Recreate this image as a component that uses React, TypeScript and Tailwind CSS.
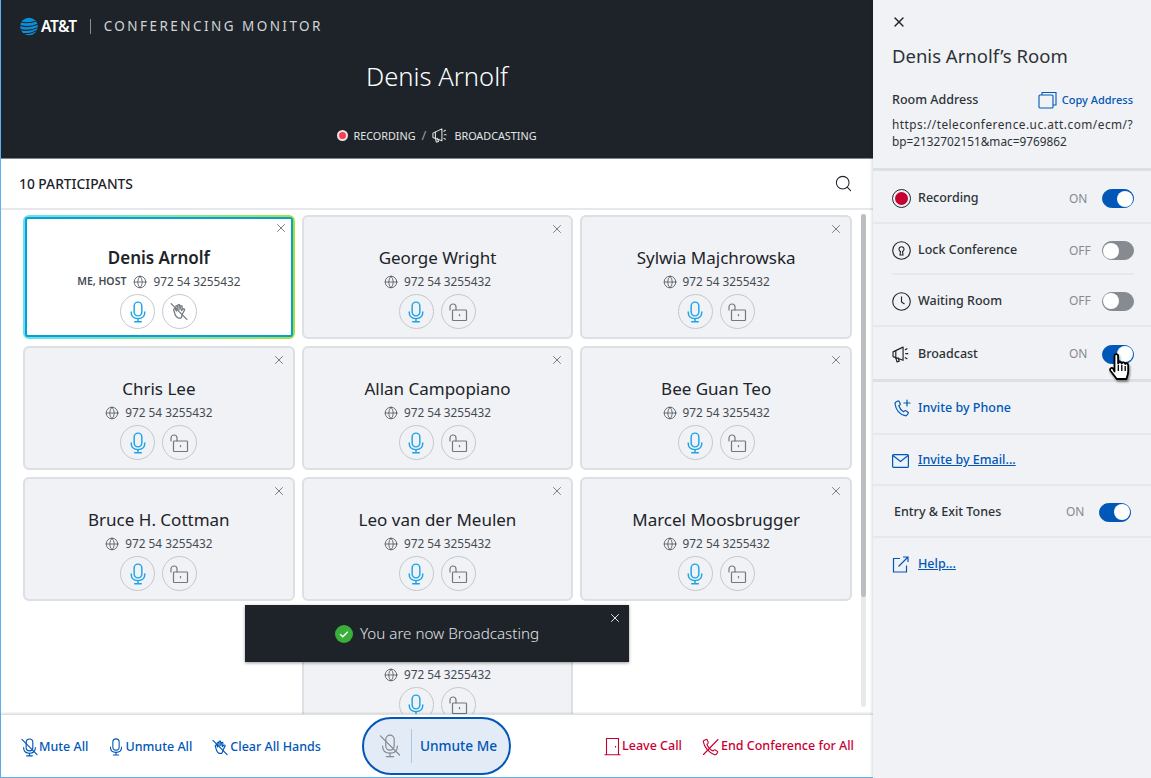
import { Search, X, Globe } from 'lucide-react'

const font = { fontFamily: '"Noto Sans", sans-serif' }

const participants = [
  { id: 1, name: 'Denis Arnolf', me: true },
  { id: 2, name: 'George Wright' },
  { id: 3, name: 'Sylwia Majchrowska' },
  { id: 4, name: 'Chris Lee' },
  { id: 5, name: 'Allan Campopiano' },
  { id: 6, name: 'Bee Guan Teo' },
  { id: 7, name: 'Bruce H. Cottman' },
  { id: 8, name: 'Leo van der Meulen' },
  { id: 9, name: 'Marcel Moosbrugger' },
  // name sits behind the toast in the picture
  { id: 10, name: '', center: true },
]

function AttLogo() {
  return (
    <svg width="18" height="19" viewBox="0 0 18 19">
      <defs>
        <clipPath id="globe">
          <circle cx="9" cy="9.5" r="8.8" />
        </clipPath>
      </defs>
      <circle cx="9" cy="9.5" r="8.8" fill="#0b8fd8" />
      <g clipPath="url(#globe)" fill="none" stroke="#1d2329" strokeWidth="1.1">
        <path d="M-1 4.2c5 2.2 12 2 19-1" />
        <path d="M-1 8c6 2.4 13 2 20-1.4" />
        <path d="M-1 12c6 2.4 13 1.6 20-2" />
        <path d="M1 16c5 1.4 11 .4 17-3.4" />
      </g>
    </svg>
  )
}

function Megaphone({ size = 18, color = 'currentColor' }: { size?: number; color?: string }) {
  return (
    <svg width={size} height={size} viewBox="0 0 18 18" fill="none" stroke={color} strokeWidth="1.1" strokeLinejoin="round" strokeLinecap="round">
      <path d="M1 6.5l9.5-4.5v12.500L1 11z" />
      <path d="M3.6 5.4v6.8" />
      <path d="M3.5 11.800l1.200 4.200 2.200-.7-1-3" />
      <path d="M12.600 4.500l1.600-1M13 8.200h2M12.600 12l1.600 1" />
    </svg>
  )
}

function MicIcon({ size = 20, color = 'currentColor', off, width = 1.2 }: { size?: number; color?: string; off?: boolean; width?: number }) {
  return (
    <svg width={size} height={size} viewBox="0 0 20 20" fill="none" stroke={color} strokeWidth={width} strokeLinecap="round">
      <rect x="6.500" y="1" width="7" height="12.500" rx="3.500" />
      <path d="M3.800 10c0 4 2.600 6 6.200 6s6.200-2 6.200-6" />
      <path d="M10 16v2.800M7 18.800h6" />
      {off && <path d="M2 1.500l16 16" />}
    </svg>
  )
}

function OpenLock({ color = '#73787e' }: { color?: string }) {
  return (
    <svg width="21" height="20" viewBox="0 0 21 20" fill="none" stroke={color} strokeWidth="1.200" strokeLinecap="round">
      <path d="M2 8V5a3 3 0 0 1 6 0v3" />
      <rect x="4.500" y="8" width="14" height="10.500" rx=".8" />
      <path d="M11.500 12.500v1.200" />
    </svg>
  )
}

function HandOff({ size = 20, color = 'currentColor' }: { size?: number; color?: string }) {
  return (
    <svg width={size} height={size} viewBox="0 0 20 20" fill="none" stroke={color} strokeWidth="1.200" strokeLinecap="round" strokeLinejoin="round">
      <path d="M6 13.500L4.500 8.600c-.4-1.200 1.100-1.800 1.700-.7l.8 1.600-.5-4c-.1-1.200 1.500-1.400 1.700-.2l.4 3-.1-4.100c0-1.200 1.600-1.200 1.700 0l.2 4 .6-3c.3-1.100 1.800-.8 1.600.3l-.6 3.600 1.300-1.400c.8-.8 2 .1 1.400 1.100l-1.800 3.400c-.5 1.100-.6 3-1.600 4H8.600c-1.200-.6-2-1.600-2.600-2.700z" />
      <path d="M2 2.500l15 15" />
    </svg>
  )
}

function SwitchToggle({ on }: { on: boolean }) {
  return (
    <div className={on ? 'w-8 h-[19px] rounded-full bg-[#0057b8] border-[1.5px] border-[#0057b8] flex items-center justify-end' : 'w-8 h-[19px] rounded-full bg-[#868a91] border-[1.5px] border-[#868a91] flex items-center justify-start'}>
      <div className="w-4 h-4 rounded-full bg-white" />
    </div>
  )
}

function Cursor() {
  return (
    <svg className="absolute left-[215px] top-[6px] drop-shadow-[1px_2px_1px_rgba(0,0,0,0.45)]" width="24" height="32" viewBox="0 0 24 32">
      <path
        d="M7.500 20.500V5c0-2.600 3.600-2.600 3.600 0v7.600c.4-2 3.400-2 3.600 0 .5-1.800 3.300-1.600 3.500.4.800-1.200 3-.8 3 1.200v6c0 3-1 5-1.800 7.800H9.800L3.600 20c-1.600-2.200 1-4 2.600-2.400z"
        fill="#fff"
        stroke="#000"
        strokeWidth="1.800"
        strokeLinejoin="round"
      />
      <path d="M11.300 14v6M14.800 14v6M18.200 15v5" stroke="#000" strokeWidth="1.300" />
    </svg>
  )
}

function ParticipantCard({ name, me, center }: { name: string; me?: boolean; center?: boolean }) {
  const body = (
    <div className={me ? 'relative h-full rounded-[3px] border-2 border-[#0a9ddb] bg-white flex flex-col items-center pt-[27px]' : 'relative h-full rounded-[6px] border-2 border-[#dcdfe3] bg-[#f0f2f5] flex flex-col items-center pt-[29px]'}>
      <button className={me ? 'absolute right-[3px] top-[2px] text-[#686e74]' : 'absolute right-[7px] top-[5px] text-[#686e74]'}>
        <X size={14} strokeWidth={1.5} />
      </button>
      <div className={me ? 'h-6 text-[17px] leading-6 font-semibold text-[#1d2329]' : 'h-6 text-[17px] leading-6 text-[#1d2329]'}>{name}</div>
      <div className="flex items-center mt-[3px] h-[18px] text-[11.8px] text-[#454b52]">
        {me && <span className="text-[10.5px] font-semibold mr-[7px]">ME, HOST</span>}
        <Globe size={14} strokeWidth={1.3} className="mr-[6px]" />
        <span>972 54 3255432</span>
      </div>
      <div className="flex gap-[7px] mt-[3px]">
        <div className="w-[35px] h-[35px] rounded-full border border-[#c4c8cd] flex items-center justify-center">
          <MicIcon size={22} color="#1ba3e8" width={1.300} />
        </div>
        <div className="w-[35px] h-[35px] rounded-full border border-[#c4c8cd] flex items-center justify-center">
          {me ? <HandOff size={21} color="#73787e" /> : <OpenLock />}
        </div>
      </div>
    </div>
  )
  if (me) {
    return <div className="h-[124px] rounded-[6px] p-[2px] bg-gradient-to-r from-[#63e3ee] to-[#a4e42c]">{body}</div>
  }
  return <div className={center ? 'h-[124px] col-start-2' : 'h-[124px]'}>{body}</div>
}

function RoomRow({ icon, label, status, on, cursor }: { icon: React.ReactNode; label: string; status: string; on: boolean; cursor?: boolean }) {
  return (
    <div className="relative flex items-center">
      <div className="w-[26px] flex items-center">{icon}</div>
      <span className="text-[12.5px] text-[#2d3238] font-medium">{label}</span>
      <span className="ml-auto w-[33px] text-[12px] text-[#868a91]">{status}</span>
      <SwitchToggle on={on} />
      {cursor && <Cursor />}
    </div>
  )
}

function Divider({ thick }: { thick?: boolean }) {
  return <div className={thick ? 'h-[3px] bg-[#dcdfe3]' : 'h-[2px] bg-[#e6e8eb]'} />
}

export default function App() {
  return (
    <div className="w-[1151px] h-[778px] flex overflow-hidden bg-white" style={font}>
      <div className="relative w-[873px] h-full flex flex-col border-l border-b border-[#5eb0f0]">
        {/* Dark header */}
        <header className="h-[159px] shrink-0 bg-[#1d2329] border-b border-[#80858a] text-white">
          <div className="flex items-center pl-[19px] pt-[17px] h-[36px]">
            <AttLogo />
            <span className="ml-[3px] text-[15.5px] font-semibold tracking-[-0.4px]">AT&amp;T</span>
            <div className="w-px h-[15px] bg-[#8a8e93] mx-[13px]" />
            <span className="text-[13.5px] tracking-[2.45px] text-[#d2d4d6]">CONFERENCING MONITOR</span>
          </div>
          <div className="mt-[23px] text-center text-[25.6px] leading-9 font-light">Denis Arnolf</div>
          <div className="mt-[31px] flex items-center justify-center text-[10.8px] text-[#e4e5e7]">
            <div className="w-[11px] h-[11px] rounded-full bg-[#ff3b4e] border-2 border-[#e6e8eb] mr-[5px]" />
            <span>RECORDING</span>
            <span className="mx-[6px] text-[#9a9ea3] text-[13px]">/</span>
            <Megaphone size={17} />
            <span className="ml-[5px]">BROADCASTING</span>
          </div>
        </header>

        {/* List title */}
        <div className="h-[51px] shrink-0 flex items-center justify-between pl-[18px] pr-[20px] border-b-2 border-[#e6e8eb]">
          <span className="pt-px text-[13.8px] font-medium text-[#1d2329]">10 PARTICIPANTS</span>
          <Search size={19} strokeWidth={1.3} className="text-[#1d2329]" />
        </div>

        {/* Cards */}
        <div className="relative flex-1 min-h-0 overflow-hidden pl-[22px] pr-[21px] pt-[5px]">
          <div className="grid grid-cols-3 gap-[7px]">
            {participants.map((p) => (
              <ParticipantCard key={p.id} name={p.name} me={p.me} center={p.center} />
            ))}
          </div>
          <div className="absolute right-[7px] top-[4px] w-[5px] h-[493px] rounded-full bg-[#e8e9eb]">
            <div className="w-[5px] h-[383px] rounded-full bg-[#bcbec1]" />
          </div>
        </div>

        {/* Toast */}
        <div className="absolute left-[244px] top-[605px] w-[384px] h-[57px] bg-[#1d2329] shadow-[0_1px_3px_rgba(0,0,0,0.4)] flex items-center justify-center text-[15.2px] font-light text-[#e0e2e4]">
          <svg className="mr-[7px]" width="18" height="18" viewBox="0 0 18 18">
            <circle cx="9" cy="9" r="9" fill="#3aae3a" />
            <path d="M5.200 9.200l2.600 2.500 5-5" fill="none" stroke="#fff" strokeWidth="1.400" />
          </svg>
          You are now Broadcasting
          <button className="absolute right-[7px] top-[6px] text-white">
            <X size={14} strokeWidth={1.5} />
          </button>
        </div>

        {/* Footer actions */}
        <footer className="relative z-10 h-[63px] shrink-0 bg-white border-t border-[#dcdfe3] shadow-[0_-1px_2px_rgba(0,0,0,0.12)] flex items-center text-[12.5px] font-medium text-[#0057b8]">
          <div className="flex items-center gap-[19px] pl-[19px] pt-[2px]">
            <span className="flex items-center">
              <MicIcon size={19} off />
              Mute All
            </span>
            <span className="flex items-center">
              <MicIcon size={18} />
              Unmute All
            </span>
            <span className="flex items-center">
              <HandOff size={19} />
              Clear All Hands
            </span>
          </div>
          <div className="ml-[41px] w-[149px] h-[58px] rounded-full border-2 border-[#0057b8] bg-[#e3ebf7] flex items-center pl-[14px] text-[13.7px]">
            <MicIcon size={24} off color="#868a91" width={1} />
            <div className="w-px h-[34px] bg-[#a9c8e8] ml-[9px] mr-[8px]" />
            Unmute Me
          </div>
          <div className="ml-auto flex items-center gap-[20px] pr-[19px] pt-px text-[#c70033]">
            <span className="flex items-center gap-px">
              <svg width="17" height="19" viewBox="0 0 17 19" fill="none" stroke="currentColor" strokeWidth="1.100">
                <path d="M2.500 17.500V1.500h12v16M.5 17.700h16" />
                <path d="M11.500 9v1.500" />
              </svg>
              Leave Call
            </span>
            <span className="flex items-center gap-px">
              <svg width="18" height="18" viewBox="0 0 18 18" fill="none" stroke="currentColor" strokeWidth="1.100" strokeLinecap="round" strokeLinejoin="round">
                <path d="M16 1.500L1.500 16.500" />
                <path d="M2 2.500l2-1c.6-.2 1 .1 1.200.6l1 2.200c.2.500 0 1-.4 1.300l-.9.6c1.200 3 3.500 5.600 6.200 6.800l.8-.8c.4-.4 1-.5 1.400-.2l2 1.300c.5.300.6.900.3 1.300l-1.200 1.500c-.5.600-1.200.8-1.900.6C7.500 15.300 2 9 1.300 3.600c0-.4.200-.9.700-1.100z" />
              </svg>
              End Conference for All
            </span>
          </div>
        </footer>
      </div>

      {/* Room panel */}
      <aside className="w-[278px] h-full bg-[#f0f2f5] shadow-[-1px_0_3px_rgba(0,0,0,0.15)] relative z-20 flex flex-col text-[#2d3238]">
        <div className="h-[168px] shrink-0 pl-[19px] pr-[18px] pt-[14px]">
          <X size={16} strokeWidth={2} className="text-[#1d2329] -ml-[1px]" />
          <div className="mt-[12px] text-[18.5px] leading-7 text-[#2d3238]">Denis Arnolf’s Room</div>
          <div className="mt-[18px] flex items-center justify-between h-6">
            <span className="text-[12.5px] font-medium">Room Address</span>
            <span className="flex items-center gap-[5px] text-[11px] font-medium text-[#0057b8]">
              <svg width="19" height="18" viewBox="0 0 19 18" fill="none" stroke="currentColor" strokeWidth="1.100">
                <rect x="1" y="4" width="14" height="13" rx="1" />
                <path d="M4 4V1.500h14V14h-3" />
              </svg>
              Copy Address
            </span>
          </div>
          <div className="mt-[4px] text-[11.8px] leading-[17px] whitespace-nowrap">
            <span className="tracking-[0.5px]">https://teleconference.uc.att.com/ecm/?</span>
            <br />
            bp=2132702151&amp;mac=9769862
          </div>
        </div>
        <Divider thick />
        <div className="pl-[19px] pr-[17px] pt-[4px] h-[51px] flex flex-col justify-center">
          <RoomRow
            icon={
              <div className="w-[19px] h-[19px] rounded-full border-[1.5px] border-[#1d2329] flex items-center justify-center">
                <div className="w-[13px] h-[13px] rounded-full bg-[#c70033]" />
              </div>
            }
            label="Recording"
            status="ON"
            on
          />
        </div>
        <Divider />
        <div className="pl-[19px] pr-[17px]">
          <div className="pt-[4px] h-[51px] flex flex-col justify-center border-b-2 border-[#e6e8eb]">
            <RoomRow
              icon={
                <svg width="19" height="19" viewBox="0 0 19 19" fill="none" stroke="#1d2329" strokeWidth="1.100">
                  <circle cx="9.500" cy="9.500" r="8.800" />
                  <path d="M8.500 10.500l-.5 3.500h3l-.5-3.500a2.500 2.500 0 1 0-2 0z" />
                </svg>
              }
              label="Lock Conference"
              status="OFF"
              on={false}
            />
          </div>
          <div className="pt-[2px] h-[50px] flex flex-col justify-center">
            <RoomRow
              icon={
                <svg width="19" height="19" viewBox="0 0 19 19" fill="none" stroke="#1d2329" strokeWidth="1.100">
                  <circle cx="9.500" cy="9.500" r="8.800" />
                  <path d="M9.500 4.500v5.500l3 2" />
                </svg>
              }
              label="Waiting Room"
              status="OFF"
              on={false}
            />
          </div>
        </div>
        <Divider />
        <div className="pl-[19px] pr-[17px] pt-[2px] h-[52px] flex flex-col justify-center">
          <RoomRow icon={<Megaphone size={19} color="#1d2329" />} label="Broadcast" status="ON" on cursor />
        </div>
        <Divider thick />
        <div className="px-[19px] pt-[2px] h-[51px] flex items-center text-[12.5px] font-medium text-[#0057b8]">
          <svg className="w-[26px] shrink-0" width="19" height="20" viewBox="0 0 26 20" fill="none" stroke="currentColor" strokeWidth="1.200" strokeLinejoin="round" strokeLinecap="round">
            <path d="M4 3l2-1c.5-.2 1 0 1.200.5l1 2.300c.2.500 0 1-.4 1.300l-1 .7c.8 2.600 2.500 4.700 4.800 6l1-.9c.4-.4 1-.4 1.400-.1l2 1.400c.4.300.5.900.2 1.300l-1.300 1.700c-.4.500-1 .7-1.600.5C7.500 15.300 3.800 10.500 3 4.500 3 3.800 3.400 3.300 4 3z" />
            <path d="M15 1v6M12 4h6" />
          </svg>
          Invite by Phone
        </div>
        <Divider />
        <div className="px-[19px] pt-[2px] h-[49px] flex items-center text-[12.5px] font-medium text-[#0057b8]">
          <svg className="shrink-0 mr-[9px]" width="17" height="14" viewBox="0 0 17 14" fill="none" stroke="currentColor" strokeWidth="1.200">
            <rect x=".6" y=".6" width="15.800" height="12.800" rx="1" />
            <path d="M1 1.500l7.500 6 7.500-6" />
          </svg>
          <span className="underline">Invite by Email...</span>
        </div>
        <Divider />
        <div className="pl-[21px] pr-[20px] pt-[2px] h-[50px] flex items-center">
          <span className="text-[12.5px] font-medium">Entry &amp; Exit Tones</span>
          <span className="ml-auto w-[33px] text-[12px] text-[#868a91]">ON</span>
          <SwitchToggle on />
        </div>
        <Divider />
        <div className="px-[19px] pt-[2px] h-[50px] flex items-center text-[12.5px] font-medium text-[#0057b8]">
          <svg className="shrink-0 mr-[9px]" width="17" height="17" viewBox="0 0 17 17" fill="none" stroke="currentColor" strokeWidth="1.200">
            <path d="M8 2.500H1.500v13.500h13V9.500" />
            <path d="M6.500 10.500L16 1M11 1h5v5" />
          </svg>
          <span className="underline">Help...</span>
        </div>
      </aside>
    </div>
  )
}
